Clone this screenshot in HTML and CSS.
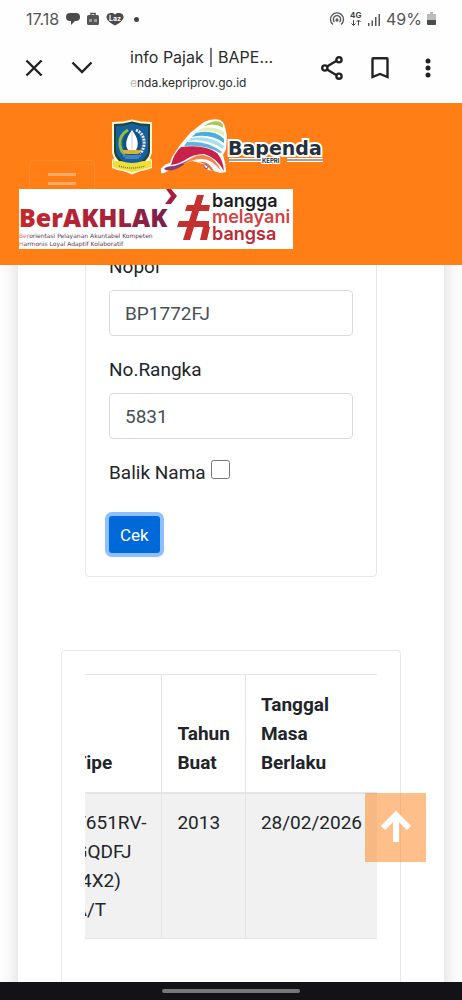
FILE: index.html
```
<!DOCTYPE html>
<html lang="id">
<head>
    <meta charset="UTF-8">
    <meta name="viewport" content="width=device-width, initial-scale=1.0">
    <link rel="stylesheet" href="styles.css">
    <title>info Pajak | BAPENDA</title>
</head>
<body>
  <div class="statusBar">
    <span class="time">17.18</span>
    <svg width="14" height="14" viewBox="0 0 14 14" fill="#4b4b4b"><path d="M4 1h6a4 4 0 0 1 0 8H9l-4 4V9H4a4 4 0 0 1 0-8z"/></svg>
    <svg class="bag" width="12" height="14" viewBox="0 0 12 14"><path d="M4 4V1.500h4V4" fill="none" stroke="#555" stroke-width="1.500"/><rect y="3" width="12" height="10" rx="1.500" fill="#555"/><path d="M2 7h3v3H2zM7 7h3v3H7z" fill="#999"/></svg>
    <svg width="18" height="14" viewBox="0 0 18 14"><path d="M4 1h3l2 1.500L11 1h3q4 1 3.500 5Q16 10 9 13.500 2 10 .5 6 0 2 4 1z" fill="#4b4b4b"/><text x="3" y="9" class="laz">Laz</text></svg>
    <span class="dot"></span>
    <span class="statusRight">
      <svg width="16" height="14" viewBox="0 0 16 14" fill="none" stroke="#555" stroke-width="1.300"><path d="M4 12.500A6.500 6.500 0 1 1 12 12.500M5.500 10A3.700 3.700 0 1 1 10.500 10"/><circle cx="8" cy="8" r="1"/></svg>
      <svg width="12" height="16" viewBox="0 0 12 16"><text x="0" y="7" class="net">4G</text><path d="M3.500 9v5M1.500 12.500l2 2 2-2M8.500 14.500v-5M6.500 11l2-2 2 2" fill="none" stroke="#444"/></svg>
      <svg width="14" height="13" viewBox="0 0 14 13" fill="#555"><path d="M1 10h1.500v3H1zM4.500 7.500H6V13H4.500zM8 4h1.500v9H8zM11.500 1H13v12h-1.500z"/></svg>
      <span>49%</span>
      <svg width="9" height="14" viewBox="0 0 9 14"><path d="M3 0h3v2h2q1 0 1 1v5H0V3q0-1 1-1h2z" fill="#bbb"/><path d="M0 8h9v4q0 1-1 1H1q-1 0-1-1z" fill="#4b4b4b"/></svg>
    </span>
  </div>

  <div class="browserBar">
    <button class="iconBtn" aria-label="Tutup"><svg width="18" height="18" viewBox="0 0 18 18"><path d="M1.500 1.500l15 15M16.500 1.500l-15 15"/></svg></button>
    <button class="iconBtn chevron" aria-label="Perkecil"><svg width="22" height="14" viewBox="0 0 22 14"><path d="M1.500 1.500L11 11l9.500-9.500"/></svg></button>
    <div class="pageInfo">
      <div class="pageTitle">info Pajak | BAPE...</div>
      <div class="pageUrl"><span class="faded">e</span>nda.kepriprov.go.id</div>
    </div>
    <div class="browserActions">
      <button class="iconBtn" aria-label="Bagikan"><svg width="22" height="24" viewBox="0 0 22 24"><path d="M6 10.500l10-6M6 13.500l10 6"/><circle cx="3.800" cy="12" r="2.600"/><circle cx="18" cy="3.800" r="2.600"/><circle cx="18" cy="20.200" r="2.600"/></svg></button>
      <button class="iconBtn" aria-label="Simpan"><svg width="18" height="22" viewBox="0 0 18 22"><path d="M1.500 20V2q0-.8.8-.8h13.400q.8 0 .8.8v18L9 17z"/></svg></button>
      <button class="iconBtn" aria-label="Menu lainnya"><svg class="dots" width="6" height="20" viewBox="0 0 6 20"><circle cx="3" cy="3" r="2.500"/><circle cx="3" cy="10" r="2.500"/><circle cx="3" cy="17" r="2.500"/></svg></button>
    </div>
  </div>

  <header class="navbar">
    <a href="#" class="brand" aria-label="Bapenda Kepri">
      <svg width="42" height="56" viewBox="0 0 42 56">
        <path d="M1 3Q12 3 21 .5 30 3 41 3v31l-2 5 2 2v8q-8 3-11 3l-9 3.500L12 52q-5 0-11-3v-8l2-2-2-5z" fill="#fff5d0"/>
        <path d="M3 5q9 0 18-2.500Q30 5 39 5v27q0 10-18 18Q3 42 3 32z" fill="#1d4438"/>
        <path d="M5 7q9 0 16-2.500Q28 7 37 7v24q0 9-16 16Q5 40 5 31z" fill="#1760a0"/>
        <path d="M17 11q-9 5-8 15 1 7 5 9" fill="none" stroke="#8fbe3f" stroke-width="3"/>
        <ellipse cx="21" cy="24" rx="9" ry="12" fill="#15517f"/>
        <path d="M25 11q9 4 8 15-1 6-4 8" fill="none" stroke="#e8edf2" stroke-width="3" stroke-dasharray="2 1"/>
        <path d="M21 11q9 12 4 20h-8q-5-8 4-20z" fill="#fff"/>
        <path d="M21 13v17" stroke="#c5cfd6"/>
        <path d="M11 31h20q-2 4-5 4h-10q-3 0-5-4z" fill="#d8b135"/>
        <path d="M12 37h18M14 39h14" stroke="#72a9d2"/>
        <path d="M2 41q3 2 8 1 11 4 22 0 4 1 8-1v7q-8 2-19 5Q10 50 2 48z" fill="#f2df35"/>
        <path d="M8 47q13 4 26 0" fill="none" stroke="#718338" stroke-width="1.500" stroke-dasharray="1 1"/>
      </svg>
      <svg class="bapenda" width="164" height="56" viewBox="0 0 164 56">
        <path d="M1 49q1-3 8-5l2-6 8-12 10-12L43 3q8-4 16-2 4 2 5 7l2 9-1 13-3 6q3 8 3 17l-6 1-6-2-6-1-5-6-10-3-12 3q-9 5-17 9-9 1-12-5z" fill="#fff"/>
        <path d="M43 7Q50 1 58 2.500q5 2 4 6Q54 4 43 7z" fill="#a9c95a"/>
        <path d="M40 10q12-4 23 3v4Q51 9 36 13z" fill="#e4efb4"/>
        <path d="M35 14q18-4 28 6v4Q49 14 31 18z" fill="#49aede"/>
        <path d="M30 19q20-3 33 8l-1 3Q46 19 27 22z" fill="#a7dfee"/>
        <path d="M26 23q20-2 35 10l-2 1Q44 25 23 27z" fill="#5eb6df"/>
        <path d="M20 28q24-3 36 6 6 7 7 18-8-14-20-17-11 0-19 6-6 4-14 5 3-12 10-18z" fill="#c9214c"/>
        <path d="M3 50q2-3 10-3 10-3 16-7-8 8-14 10-8 3-12 0z" fill="#8c3a78"/>
        <path d="M22 45q14-12 24-8 9 3 14 15-9-12-19-12-10 0-16 5z" fill="#f38548"/>
        <path d="M37 43q10-2 16 9-3 0-4-2-4-6-12-7z" fill="#e2703f"/>
        <path d="M42 46q5-1 5 3-3 2-4-1" fill="none" stroke="#7057a1"/>
        <text x="67" y="36" class="bapendaText">Bapenda</text>
        <path d="M68 41h32M126 41h36" stroke="#fff" stroke-width="4"/>
        <path d="M68 41h32M126 41h36" stroke="#5b3930"/>
        <text x="101" y="44" class="kepriText">KEPRI</text>
      </svg>
    </a>
    <button class="toggler" aria-label="Navigasi"><span></span><span></span></button>
    <div class="banner">
      <svg width="274" height="60" viewBox="0 0 274 60">
        <defs><linearGradient id="red"><stop offset="0" stop-color="#c5282d"/><stop offset=".6" stop-color="#a92237"/><stop offset="1" stop-color="#79204b"/></linearGradient></defs>
        <text x="0" y="38" class="akhlak" fill="url(#red)">BerAKHLAK</text>
        <path d="M147 0h5l6 7-6 8h-6l6-8z" fill="#a51f43"/>
        <text x="0" y="49" class="motto"><tspan fill="#d47a80">Ber</tspan>orientasi Pelayanan Akuntabel Kompeten</text>
        <text x="0" y="57" class="motto"><tspan fill="#d47a80">H</tspan>armonis Loyal Adaptif Kolaboratif</text>
        <path d="M178 6h7l-3 10h9l-1 6h-10l-3 10h13v6h-15l-4 13h-7l4-13h-10l2-6h10l3-10h-7l2-6h7zM184 38h7l-3 13h-7z" fill="#c5302f"/>
        <text x="193" y="18" class="bangga">bangga</text>
        <text x="193" y="34" class="bangga light">melayani</text>
        <text x="193" y="51" class="bangga dark">bangsa</text>
      </svg>
    </div>
  </header>

  <main>
    <div class="container">
      <form class="card formCard">
        <label for="nopol">Nopol</label>
        <input type="text" id="nopol" name="nopol" value="BP1772FJ">
        <label for="rangka">No.Rangka</label>
        <input type="text" id="rangka" name="rangka" value="5831">
        <div class="checkRow">
          <label for="balikNama">Balik Nama</label>
          <input type="checkbox" id="balikNama" name="balikNama">
        </div>
        <button type="button" class="btn">Cek</button>
      </form>

      <div class="card resultCard">
        <div class="tableWrap">
          <table>
            <thead>
              <tr>
                <th>Tipe</th>
                <th>Tahun<br>Buat</th>
                <th>Tanggal<br>Masa<br>Berlaku</th>
              </tr>
            </thead>
            <tbody>
              <tr>
                <td>T651RV-<br>GQDFJ<br>(4X2)<br>A/T</td>
                <td>2013</td>
                <td>28/02/2026</td>
              </tr>
            </tbody>
          </table>
        </div>
      </div>
    </div>
  </main>

  <a href="#" class="backTop" aria-label="Kembali ke atas">
    <svg width="32" height="34" viewBox="0 0 32 34"><path d="M16 31V4M3 17L16 4l13 13"/></svg>
  </a>
  <div class="gestureBar"><span></span></div>
</body>
</html>
```
FILE: styles.css
```
* {
  box-sizing: border-box;
}

body {
  margin: 0;
  height: 100vh;
  display: flex;
  flex-direction: column;
  overflow: hidden;
  font-family: Roboto, sans-serif;
  font-size: 19px;
  line-height: 29px;
  color: #212529;
  background-color: #fefefe;
}

svg {
  display: block;
}

button {
  font-family: inherit;
  cursor: pointer;
}

/* phone status bar */
.statusBar {
  display: flex;
  align-items: center;
  gap: 7px;
  height: 38px;
  padding: 0 26px;
  font-family: Inter, sans-serif;
  font-size: 16px;
  color: #555;
}
.statusBar .dot {
  width: 5px;
  height: 5px;
  margin-left: 3px;
  border-radius: 50%;
  background-color: #444;
}
.statusRight {
  display: flex;
  align-items: center;
  gap: 5px;
  margin-left: auto;
}
.laz {
  font: bold 7px Inter, sans-serif;
  fill: #fff;
}
.net {
  font: bold 8px Inter, sans-serif;
  fill: #444;
}

/* browser bar */
.browserBar {
  display: flex;
  align-items: center;
  height: 65px;
  padding: 0 31px 6px 25px;
  font-family: Inter, sans-serif;
  color: #2b2b2b;
}
.iconBtn {
  padding: 0;
  border: 0;
  background: none;
}
.iconBtn svg {
  fill: none;
  stroke: #222;
  stroke-width: 2.4;
}
.iconBtn svg.dots {
  fill: #222;
  stroke: none;
}
.chevron {
  margin-left: 28px;
}
.pageInfo {
  margin-left: 37px;
  padding-top: 4px;
  white-space: nowrap;
}
.pageTitle {
  font-size: 16px;
  line-height: 26px;
}
.pageUrl {
  font-size: 12px;
  line-height: 26px;
}
.faded {
  color: #bbb;
}
.browserActions {
  display: flex;
  align-items: center;
  gap: 28px;
  margin-left: auto;
}
.browserActions .iconBtn:last-child {
  margin-left: 8px;
}

/* site header */
.navbar {
  position: relative;
  z-index: 1;
  flex: none;
  padding: 16px 19px;
  background-color: #ff7f16;
}
.brand {
  display: flex;
  gap: 8px;
  margin-left: 92px;
}
.bapendaText {
  font: bold 19px "DejaVu Sans", sans-serif;
  fill: #26303c;
  stroke: #fff;
  stroke-width: 4px;
  paint-order: stroke;
}
.kepriText {
  font: bold 6px Inter, sans-serif;
  fill: #26303c;
  stroke: #fff;
  stroke-width: 2px;
  paint-order: stroke;
}
.toggler {
  display: flex;
  flex-direction: column;
  align-items: center;
  gap: 6px;
  width: 66px;
  height: 44px;
  margin: -15px 0 -15px 10px;
  padding: 12px 0;
  border: 1px solid #ff8a2b;
  border-radius: 4px;
  background: none;
}
.toggler span {
  width: 28px;
  height: 3px;
  background-color: #ffab68;
}
.banner {
  position: relative;
  width: 274px;
  background-color: #fff;
}
.akhlak {
  font: 800 25px "Open Sans", sans-serif;
}
.motto {
  font: 6px "DejaVu Sans", sans-serif;
  fill: #5c3a4c;
}
.bangga {
  font: 600 18px Inter, sans-serif;
  fill: #1c1c1c;
}
.bangga.light {
  fill: #cf4444;
}
.bangga.dark {
  fill: #bd2b35;
}

/* content */
main {
  flex: 1;
  min-height: 0;
  overflow: hidden;
  padding: 0 18px;
}
.container {
  min-height: 100%;
  margin-top: -37px;
  padding: 0 43px;
  background-color: #fff;
  box-shadow: 0 0 18px rgba(0, 0, 0, 0.16);
}
.card {
  padding: 23px;
  border: 1px solid #e8e8e8;
  border-radius: 4px;
}
.formCard {
  margin: 0 24px;
}
.formCard label {
  display: block;
  margin-bottom: 9px;
}
input[type=text] {
  display: block;
  width: 100%;
  height: 46px;
  margin-bottom: 19px;
  padding: 0 15px;
  border: 1px solid #d8dade;
  border-radius: 4px;
  font-family: inherit;
  font-size: 19px;
  color: #495057;
  background-color: #fff;
}
.checkRow {
  display: flex;
  gap: 5px;
  margin-bottom: 29px;
}
.formCard .checkRow label {
  margin: 0;
}
input[type=checkbox] {
  width: 19px;
  height: 19px;
  margin: 2px 0;
}
.btn {
  display: block;
  height: 37px;
  padding: 0 11px;
  border: 0;
  border-radius: 3px;
  font-size: 17px;
  color: #fff;
  background-color: #0069d9;
  box-shadow: 0 0 0 4px #8ebfff;
}

.resultCard {
  height: 400px;
  margin-top: 73px;
}
.tableWrap {
  display: flex;
  justify-content: flex-end;
  overflow: hidden;
}
table {
  flex: none;
  border-collapse: collapse;
}
th, td {
  padding: 15px;
  border: 1px solid #e2e5e8;
  border-right: 0;
  text-align: left;
  vertical-align: top;
}
th {
  vertical-align: bottom;
  border-bottom-width: 2px;
}
td {
  padding-top: 14px;
  padding-bottom: 14px;
}
tbody tr {
  background-color: #f1f1f1;
}

.backTop {
  position: fixed;
  right: 36px;
  bottom: 138px;
  display: flex;
  align-items: center;
  justify-content: center;
  width: 61px;
  height: 69px;
  background-color: rgba(255, 127, 22, 0.5);
}
.backTop svg {
  fill: none;
  stroke: #fff;
  stroke-width: 6;
}

.gestureBar {
  position: relative;
  flex: none;
  display: flex;
  align-items: center;
  justify-content: center;
  height: 18px;
  background-color: #121217;
}
.gestureBar span {
  width: 30%;
  height: 4px;
  border-radius: 2px;
  background-color: #777;
}
```
